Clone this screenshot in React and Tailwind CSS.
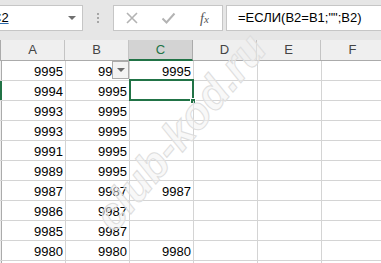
import React from "react";

const rows = [
  ["9995", "9995", "9995"],
  ["9994", "9995", ""],
  ["9993", "9995", ""],
  ["9993", "9995", ""],
  ["9991", "9995", ""],
  ["9989", "9995", ""],
  ["9987", "9987", "9987"],
  ["9986", "9987", ""],
  ["9985", "9987", ""],
  ["9980", "9980", "9980"],
  ["", "", ""],
];

const cols = ["A", "B", "C", "D", "E", "F"];

// Верхняя панель: поле имени + строка формул
const FormulaBar = () => (
  <div className="h-[40px] bg-[#e6e6e6] flex items-start pt-[5px] shrink-0">
    <div className="ml-[-12px] w-[95px] h-[26px] bg-white border border-[#c6c6c6] flex items-center pl-[3px] pr-[6px]">
      <span className="text-[13px] text-black underline decoration-[#2b6cb0]">C2</span>
      <div className="ml-auto w-0 h-0 border-l-[4px] border-r-[4px] border-t-[4px] border-l-transparent border-r-transparent border-t-[#6f6f6f]" />
    </div>
    <div className="w-[30px] h-[26px] flex flex-col items-center justify-center gap-[2px]">
      <div className="w-[2px] h-[2px] bg-[#a6a6a6]" />
      <div className="w-[2px] h-[2px] bg-[#a6a6a6]" />
      <div className="w-[2px] h-[2px] bg-[#a6a6a6]" />
    </div>
    <div className="w-[110px] h-[26px] bg-white border border-[#c6c6c6] flex items-center">
      <svg className="ml-[11px]" width="14" height="14" viewBox="0 0 14 14">
        <path d="M2 2 L12 12 M12 2 L2 12" stroke="#b3b3b3" strokeWidth="1.6" />
      </svg>
      <svg className="ml-[22px]" width="15" height="14" viewBox="0 0 15 14">
        <path d="M1.5 7.5 L5.5 11.5 L13.5 2.5" stroke="#b3b3b3" strokeWidth="2" fill="none" />
      </svg>
      <span className="ml-[24px] text-[14px] text-[#555] italic font-['Liberation_Serif',serif]">
        f<span className="text-[11px]">x</span>
      </span>
    </div>
    <div className="ml-[3px] flex-1 h-[26px] bg-white border border-[#c6c6c6] border-r-0 flex items-center pl-[11px]">
      <span className="text-[13px] text-black whitespace-nowrap">=ЕСЛИ(B2=B1;"";B2)</span>
    </div>
  </div>
);

const HeaderRow = () => (
  <div className="h-[21px] flex shrink-0 bg-[#efefef] border-b border-[#ababab]">
    <div className="w-[2px] border-r border-[#ababab]" />
    {cols.map((c) =>
      c === "C" ? (
        <div
          key={c}
          className="w-[64px] shrink-0 bg-[#d3d3d3] border-r border-[#ababab] border-b-2 border-b-[#217346] mb-[-1px] flex items-center justify-center text-[13px] text-[#217346]"
        >
          {c}
        </div>
      ) : (
        <div
          key={c}
          className="w-[64px] shrink-0 border-r border-[#c4c4c4] flex items-center justify-center text-[13px] text-[#444]"
        >
          {c}
        </div>
      )
    )}
  </div>
);

const Cell = ({ children, filter }) => (
  <div className="relative w-[64px] shrink-0 border-r border-[#d4d4d4] flex items-center justify-end pr-[2px] pt-[2px] text-[13px] text-black">
    {children}
    {filter && (
      <div className="absolute right-0 top-0 w-[17px] h-[18px] bg-[#f3f3f3] border border-[#ababab] flex items-center justify-center">
        <div className="w-0 h-0 border-l-[4px] border-r-[4px] border-t-[4px] border-l-transparent border-r-transparent border-t-[#6b6b6b]" />
      </div>
    )}
  </div>
);

export default function App() {
  return (
    <div className="relative w-[381px] h-[263px] overflow-hidden bg-white flex flex-col font-['Liberation_Sans',Arial,sans-serif]">
      <FormulaBar />
      <HeaderRow />
      {rows.map((r, i) => (
        <div key={i} className="h-[20px] flex shrink-0 border-b border-[#d4d4d4]">
          <div
            className={
              i === 1
                ? "w-[2px] shrink-0 bg-[#217346]"
                : "w-[2px] shrink-0 bg-[#efefef] border-r border-[#ababab]"
            }
          />
          <Cell>{r[0]}</Cell>
          <Cell filter={i === 0}>{r[1]}</Cell>
          {i === 1 ? (
            <div className="relative w-[64px] shrink-0 border-r border-[#d4d4d4]">
              <div className="absolute left-[-1px] top-[-2px] w-[65px] h-[22px] border-2 border-[#217346]" />
              <div className="absolute right-[-3px] bottom-[-4px] w-[6px] h-[6px] bg-[#217346] border border-white" />
            </div>
          ) : (
            <Cell>{r[2]}</Cell>
          )}
          <Cell />
          <Cell />
          <Cell />
        </div>
      ))}

      {/* водяной знак */}
      <div className="pointer-events-none absolute left-[180px] top-[132px] -translate-x-1/2 -translate-y-1/2 -rotate-[50deg] whitespace-nowrap text-[44px] font-bold italic text-[#f2f2f2]/50 [-webkit-text-stroke:1px_#dedede]">
        club-kod.ru
      </div>
    </div>
  );
}
